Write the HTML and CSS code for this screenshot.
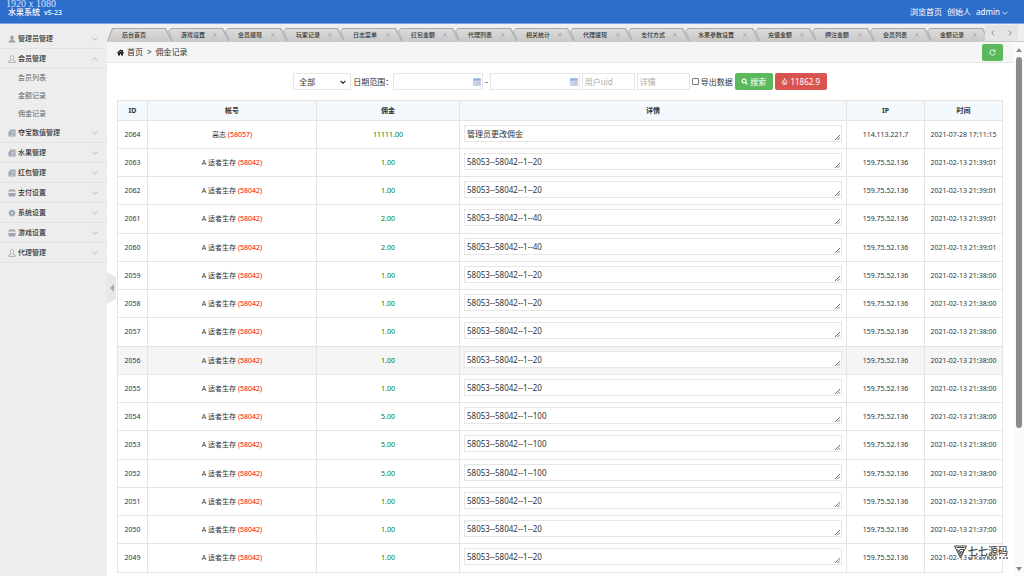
FILE: index.html
```
<!DOCTYPE html>
<html lang="zh-CN">

<head>
  <meta charset="utf-8" />
  <meta name="viewport" content="width=device-width, initial-scale=1" />
  <link rel="stylesheet" href="styles.css">
  <title>水果系统</title>
</head>

<body>
  <!-- Shared icons -->
  <svg class="sprite" aria-hidden="true">
    <symbol id="i-user" viewBox="0 0 16 16"><path d="M8 1c2.400 0 3.500 1.500 3.500 4 0 1.800-.8 3-1.700 3.800v1.400l4.700 2V15h-13v-2.800l4.700-2V8.800C5.300 8 4.500 6.800 4.500 5c0-2.500 1.100-4 3.500-4z" /></symbol>
    <symbol id="i-doc" viewBox="0 0 16 16"><path d="M4 1h11v14H1V5h3z" /><path d="M6 4h7M6 7h7M6 10h7M3 12.500h10" stroke="#ededed" stroke-width="1" /></symbol>
    <symbol id="i-card" viewBox="0 0 16 16"><path d="M3 1h10l2 3v9l-2 2H3l-2-2V4z" /><path d="M1 6.500h14" stroke="#ededed" stroke-width="3" /></symbol>
    <symbol id="i-gear" viewBox="0 0 16 16"><circle cx="8" cy="8" r="5.500" /><path d="M8 1v14M1 8h14M3 3l10 10M13 3L3 13" stroke="currentColor" stroke-width="2.200" /><circle cx="8" cy="8" r="2" fill="#ededed" /></symbol>
    <symbol id="i-chev" viewBox="0 0 10 6"><path d="M1 1l4 4 4-4" fill="none" stroke="currentColor" stroke-width="1.300" /></symbol>
  </svg>

  <header class="header">
    <span class="resolution">1920 x 1080</span>
    <h1 class="brand">水果系统 <small>v5-23</small></h1>
    <nav class="header-links">
      <a href="#">浏览首页</a>
      <a href="#">创始人</a>
      <a href="#">admin <svg class="chev"><use href="#i-chev" /></svg></a>
    </nav>
  </header>

  <div class="layout">
    <aside class="sidebar">
      <ul class="menu">
        <li><a href="#"><svg class="icon"><use href="#i-user" /></svg>管理员管理<svg class="chev"><use href="#i-chev" /></svg></a></li>
        <li>
          <a href="#"><svg class="icon outline"><use href="#i-user" /></svg>会员管理<svg class="chev up"><use href="#i-chev" /></svg></a>
          <ul class="submenu">
            <li><a href="#">会员列表</a></li>
            <li><a href="#">金额记录</a></li>
            <li><a href="#">佣金记录</a></li>
          </ul>
        </li>
        <li><a href="#"><svg class="icon"><use href="#i-doc" /></svg>夺宝数值管理<svg class="chev"><use href="#i-chev" /></svg></a></li>
        <li><a href="#"><svg class="icon"><use href="#i-doc" /></svg>水果管理<svg class="chev"><use href="#i-chev" /></svg></a></li>
        <li><a href="#"><svg class="icon"><use href="#i-doc" /></svg>红包管理<svg class="chev"><use href="#i-chev" /></svg></a></li>
        <li><a href="#"><svg class="icon"><use href="#i-card" /></svg>支付设置<svg class="chev"><use href="#i-chev" /></svg></a></li>
        <li><a href="#"><svg class="icon"><use href="#i-gear" /></svg>系统设置<svg class="chev"><use href="#i-chev" /></svg></a></li>
        <li><a href="#"><svg class="icon"><use href="#i-card" /></svg>游戏设置<svg class="chev"><use href="#i-chev" /></svg></a></li>
        <li><a href="#"><svg class="icon outline"><use href="#i-user" /></svg>代理管理<svg class="chev"><use href="#i-chev" /></svg></a></li>
      </ul>
      <button class="collapse" aria-label="收起菜单"></button>
    </aside>

    <div class="main">
      <div class="tabbar">
        <ul class="tabs" id="tabs">
          <!-- Tabs are populated in JavaScript -->
        </ul>
        <div class="tab-nav">
          <button aria-label="上一页"><svg viewBox="0 0 6 10"><path d="M5 1L1 5l4 4" /></svg></button>
          <button aria-label="下一页"><svg viewBox="0 0 6 10"><path d="M1 1l4 4-4 4" /></svg></button>
        </div>
      </div>

      <div class="frame">
        <div class="page">
          <div class="crumbs">
            <svg class="home" viewBox="0 0 16 16"><path d="M8 1L0 8.500 1.500 10 8 4l6.500 6L16 8.500l-2.500-2.400V2h-2v2.200zM8 5.500L2.500 10.500V15h4v-4h3v4h4v-4.500z" /></svg>
            <a href="#">首页</a><span>&gt;</span><span>佣金记录</span>
            <button class="btn green refresh" aria-label="刷新">
              <svg viewBox="0 0 16 16"><path d="M13 4.500A6 6 0 1 0 14 9M14 1.500v4h-4" fill="none" stroke="#fff" stroke-width="2" /></svg>
            </button>
          </div>

          <form class="search">
            <select aria-label="类型">
              <option>全部</option>
            </select>
            <label class="range" for="from">日期范围：</label>
            <input class="date" id="from" type="text">
            <span>-</span>
            <input class="date" type="text" aria-label="结束日期">
            <input type="text" placeholder="用户uid" aria-label="用户uid">
            <input type="text" placeholder="详情" aria-label="详情">
            <label class="export"><input type="checkbox">导出数据</label>
            <button class="btn green" type="button">
              <svg viewBox="0 0 16 16"><path d="M10.500 10.500L14.500 14.500" stroke="#fff" stroke-width="3" /><circle cx="7" cy="7" r="4.500" fill="none" stroke="#fff" stroke-width="2.500" /></svg>搜索
            </button>
            <button class="btn red" type="button">
              <svg viewBox="0 0 16 16"><path d="M8 1c1 3 5.500 5 5.500 9A5.500 5 0 0 1 2.500 10c0-2 1-3 2-4l1 2C7 6 8 4 8 1zM8 9c-2 2-2 4 0 4s2-2 0-4z" fill="none" stroke="#fff" stroke-width="1.800" /></svg>11862.9
            </button>
          </form>

          <table class="records">
            <colgroup>
              <col class="c-id"><col class="c-name"><col class="c-sum"><col><col class="c-ip"><col class="c-time">
            </colgroup>
            <thead>
              <tr>
                <th>ID</th>
                <th>帐号</th>
                <th>佣金</th>
                <th>详情</th>
                <th>IP</th>
                <th>时间</th>
              </tr>
            </thead>
            <tbody id="records"></tbody>
          </table>
        </div>

        <div class="scrollbar" aria-hidden="true">
          <i class="arrow-up"></i>
          <i class="thumb"></i>
          <i class="arrow-down"></i>
        </div>
      </div>
    </div>
  </div>

  <div class="watermark">
    <svg viewBox="0 0 26 28"><path d="M1 2h24L13 26zM5 5h16M7 9l6 12M10 9l4 8M12 9h8l-5 10M15 12l-2 5" fill="none" stroke="#444" stroke-width="2" /></svg>
    <span>七七源码</span>
  </div>

  <script>
    const tabs = ["后台首页", "游戏设置", "会员提现", "玩家记录", "日志菜单", "红包金额", "代理列表", "相关统计",
      "代理提现", "支付方式", "水果参数设置", "充值金额", "押注金额", "会员列表", "金额记录"];

    document.getElementById("tabs").innerHTML = tabs.map((name, i) =>
      `<li><a href="#">${name}</a>${i ? `<button aria-label="关闭${name}">×</button>` : ""}</li>`
    ).join("");

    // [amount, detail, time]
    const rows = [
      ["11111.00", "管理员更改佣金", "2021-07-28 17:11:15"],
      ["1.00", "58053--58042--1--20", "2021-02-13 21:39:01"],
      ["1.00", "58053--58042--1--20", "2021-02-13 21:39:01"],
      ["2.00", "58053--58042--1--40", "2021-02-13 21:39:01"],
      ["2.00", "58053--58042--1--40", "2021-02-13 21:39:01"],
      ["1.00", "58053--58042--1--20", "2021-02-13 21:38:00"],
      ["1.00", "58053--58042--1--20", "2021-02-13 21:38:00"],
      ["1.00", "58053--58042--1--20", "2021-02-13 21:38:00"],
      ["1.00", "58053--58042--1--20", "2021-02-13 21:38:00"],
      ["1.00", "58053--58042--1--20", "2021-02-13 21:38:00"],
      ["5.00", "58053--58042--1--100", "2021-02-13 21:38:00"],
      ["5.00", "58053--58042--1--100", "2021-02-13 21:38:00"],
      ["5.00", "58053--58042--1--100", "2021-02-13 21:38:00"],
      ["1.00", "58053--58042--1--20", "2021-02-13 21:37:00"],
      ["1.00", "58053--58042--1--20", "2021-02-13 21:37:00"],
      ["1.00", "58053--58042--1--20", "2021-02-13 21:37:00"]
    ];

    document.getElementById("records").innerHTML = rows.map(([sum, detail, time], i) => {
      const id = 2064 - i;
      const user = i ? "A 适者生存 <b>(58042)</b>" : "高志 <b>(58057)</b>";
      const ip = i ? "159.75.52.136" : "114.113.221.7";
      return `<tr${id === 2056 ? ' class="active"' : ""}>
        <td>${id}</td>
        <td class="user">${user}</td>
        <td class="sum">${sum}</td>
        <td class="detail"><textarea rows="1" aria-label="详情 ${id}">${detail}</textarea></td>
        <td>${ip}</td>
        <td>${time}</td>
      </tr>`;
    }).join("");
  </script>
</body>

</html>
```
FILE: styles.css
```
* {
  box-sizing: border-box;
}

body {
  margin: 0;
  height: 100vh;
  display: flex;
  flex-direction: column;
  overflow: hidden;
  font: 8px/12px "Noto Sans", "Noto Sans CJK SC", sans-serif;
  color: #333;
  background: #fff;
}

a {
  color: inherit;
  text-decoration: none;
}

ul {
  margin: 0;
  padding: 0;
  list-style: none;
}

button,
input,
select,
textarea {
  font: inherit;
  color: inherit;
  margin: 0;
}

button {
  border: 0;
  padding: 0;
  background: none;
}

.sprite {
  display: none;
}

.chev {
  width: 6px;
  height: 4px;
}

/* header */
.header {
  display: flex;
  justify-content: space-between;
  align-items: center;
  height: 24px;
  flex: none;
  padding: 0 16px 0 8px;
  color: #fff;
  background: #2d6dcc;
  border-bottom: 1px solid #7ba6e2;
}

.resolution {
  position: absolute;
  top: 0;
  left: 6px;
  font: 10px/8px "Liberation Serif", serif;
  color: #d5e2f5;
}

.brand {
  margin: 0;
  padding-top: 2px;
  font-size: 8px;
  line-height: 10px;
  font-weight: 500;
}

.brand small {
  margin-left: 2px;
  font-size: 7px;
}

.header-links {
  display: flex;
  gap: 5px;
}

/* sidebar */
.layout {
  flex: 1;
  display: flex;
  min-height: 0;
}

.sidebar {
  position: relative;
  flex: none;
  width: 107px;
  padding-top: 5px;
  background: #ededed;
}

.menu > li > a {
  display: flex;
  align-items: center;
  height: 20px;
  padding: 0 9px 0 8px;
  font-size: 7px;
  font-weight: 500;
  border-bottom: 1px solid #e3e3e3;
}

.menu .icon {
  width: 8px;
  height: 8px;
  margin-right: 2px;
  fill: #9aa3b1;
  color: #9aa3b1;
}

.menu .outline {
  fill: none;
  stroke: #9aa3b1;
  stroke-width: 1.5;
}

.menu .chev {
  margin-left: auto;
  color: #aaa;
}

.menu .up {
  transform: rotate(180deg);
}

.submenu a {
  display: block;
  padding-left: 18px;
  line-height: 18px;
  color: #666;
}

.submenu {
  font-size: 7px;
}

.collapse {
  position: absolute;
  top: 248px;
  left: 100%;
  z-index: 1;
  display: grid;
  place-items: center;
  width: 9px;
  height: 32px;
  background: #e8e8e8;
  clip-path: polygon(0 0, 100% 5px, 100% 27px, 0 100%);
}

.collapse::before {
  content: "";
  border: 4px solid transparent;
  border-left: 0;
  border-right-color: #aaa;
}

/* tabs */
.main {
  flex: 1;
  min-width: 0;
  display: flex;
  flex-direction: column;
}

.tabbar {
  display: flex;
  flex: none;
  height: 18px;
  padding: 1px 6px 0 0;
  background: #efeff2;
  border-bottom: 1px solid #ccc;
}

.tabs {
  flex: 1;
  min-width: 0;
  display: flex;
  overflow: hidden;
  padding-top: 3px;
}

.tabs li {
  position: relative;
  flex: none;
  display: flex;
  align-items: center;
  width: 64px;
  margin-right: -6px;
  padding-left: 15px;
  font-size: 6px;
  font-weight: 500;
  background: #aaa;
  clip-path: polygon(5px 0, 2px 3px, 6px 100%, 100% 100%, calc(100% - 6px) 0);
}

/* inner fill, 1px inside the grey outline */
.tabs li::before {
  content: "";
  position: absolute;
  inset: 1px 1px 0 1px;
  background: linear-gradient(#dcdcdc, #c9c9c9);
  clip-path: polygon(4px 0, 2px 2px, 6px 100%, 100% 100%, calc(100% - 6px) 0);
}

.tabs li:nth-child(even) {
  width: 63px;
}

.tabs li:first-child {
  width: 65px;
}

.tabs li:first-child,
.tabs li:first-child::before {
  clip-path: polygon(5px 0, 0 100%, 100% 100%, calc(100% - 6px) 0);
}

.tabs li:nth-child(11) {
  width: 76px;
}

.tabs a,
.tabs button {
  position: relative;
}

.tabs button {
  margin: 0 12px 0 auto;
  font-size: 8px;
  line-height: 8px;
  color: #aaa;
}

.tab-nav {
  display: flex;
  width: 33px;
  background: #e4e4e4;
}

.tab-nav button {
  flex: 1;
}

.tab-nav svg {
  width: 4px;
  height: 6px;
  fill: none;
  stroke: #555;
}

/* page */
.frame {
  flex: 1;
  min-height: 0;
  display: flex;
}

.page {
  flex: 1;
  min-width: 0;
  overflow: hidden;
}

.crumbs {
  display: flex;
  align-items: center;
  gap: 4px;
  height: 21px;
  padding: 0 10px;
  background: #f5f5f5;
  border-bottom: 1px solid #e8e8e8;
}

.home {
  width: 7px;
  height: 7px;
  margin-right: -1px;
}

.btn {
  display: flex;
  align-items: center;
  justify-content: center;
  gap: 2px;
  height: 17px;
  border-radius: 2px;
  color: #fff;
}

.btn svg {
  width: 7px;
  height: 7px;
}

.green {
  width: 38px;
  background: #5cb85c;
}

.red {
  width: 52px;
  background: #d9534f;
}

.refresh {
  width: 21px;
  margin-left: auto;
}

.search {
  display: flex;
  align-items: center;
  justify-content: center;
  gap: 2px;
  padding: 10px 0;
}

.search select,
.search input[type="text"] {
  width: 53px;
  height: 17px;
  padding: 0 2px;
  border: 1px solid #e6e6e6;
  background: #fff;
}

.search select {
  width: 58px;
  padding: 0 5px;
  appearance: none;
  background: #fff url("data:image/svg+xml,%3Csvg xmlns='http://www.w3.org/2000/svg' viewBox='0 0 10 6'%3E%3Cpath d='M1 1l4 4 4-4' fill='none' stroke='%23222' stroke-width='2'/%3E%3C/svg%3E") no-repeat right 4px center / 6px 4px;
}

.search .date[type="text"] {
  width: 90px;
  background: url("data:image/svg+xml,%3Csvg xmlns='http://www.w3.org/2000/svg' viewBox='0 0 16 16'%3E%3Cpath d='M1 1h14v14H1z' fill='%23c4d5f1' stroke='%23a5b9dd'/%3E%3Cpath d='M1 1h14v4H1z' fill='%2393b0e5'/%3E%3Cpath d='M9 8h5v5H9z' fill='%23e9b9a4'/%3E%3C/svg%3E") no-repeat right 1px center / 8px 8px;
}

.search ::placeholder {
  color: #aaa;
}

.range {
  width: 38px;
  white-space: nowrap;
}

.export {
  display: flex;
  align-items: center;
  gap: 2px;
  white-space: nowrap;
}

.export input {
  appearance: none;
  width: 7px;
  height: 7px;
  border: 1px solid #767676;
  border-radius: 1px;
  background: #fff;
}

.export input:checked {
  background: #2d6dcc;
}

.records {
  width: calc(100% - 20px);
  margin: 0 10px;
  table-layout: fixed;
  border-collapse: collapse;
  font-size: 7px;
  line-height: 10px;
  text-align: center;
}

.c-id {
  width: 30px;
}

.c-name {
  width: 169px;
}

.c-sum {
  width: 143px;
}

.c-ip,
.c-time {
  width: 78px;
}

.records th,
.records td {
  height: 28px;
  padding: 0;
  border: 1px solid #e4e4e4;
}

.records th {
  height: 20px;
  font-weight: 700;
  background: #f4f9fe;
}

.records tr:nth-child(4n) td {
  height: 29px;
}

.records .active {
  background: #f5f5f5;
}

.user b {
  font-weight: 400;
  color: #f00;
}

.records .sum {
  color: #008000;
}

.records .detail {
  padding: 4px;
  vertical-align: top;
}

.detail textarea {
  display: block;
  width: 100%;
  height: 17px;
  padding: 2px;
  border: 1px solid #e6e6e6;
  font-size: 8px;
  line-height: 11px;
  overflow: hidden;
  resize: none;
  background: #fff url("data:image/svg+xml,%3Csvg xmlns='http://www.w3.org/2000/svg' viewBox='0 0 6 6'%3E%3Cpath d='M0 6l6-6M3 6l3-3' stroke='%23555'/%3E%3C/svg%3E") no-repeat right 1px bottom 1px / 5px 5px;
}

/* scrollbar */
.scrollbar {
  flex: none;
  display: flex;
  flex-direction: column;
  align-items: center;
  width: 11px;
  padding: 6px 0 5px;
  background: #fafafa;
}

.arrow-up,
.arrow-down {
  border: 3px solid transparent;
}

.arrow-up {
  border-top: 0;
  border-bottom: 4px solid #888;
}

.arrow-down {
  margin-top: auto;
  border-bottom: 0;
  border-top: 4px solid #888;
}

.thumb {
  width: 6px;
  height: 71%;
  margin-top: 5px;
  border-radius: 3px;
  background: #8b8b8b;
}

.watermark {
  position: absolute;
  right: 16px;
  bottom: 17px;
  display: flex;
  align-items: center;
  gap: 1px;
  color: #444;
}

.watermark svg {
  width: 13px;
  height: 14px;
}

.watermark span {
  font: 500 10px/12px "Noto Sans CJK SC", sans-serif;
  border-bottom: 2px dotted #888;
}
```
